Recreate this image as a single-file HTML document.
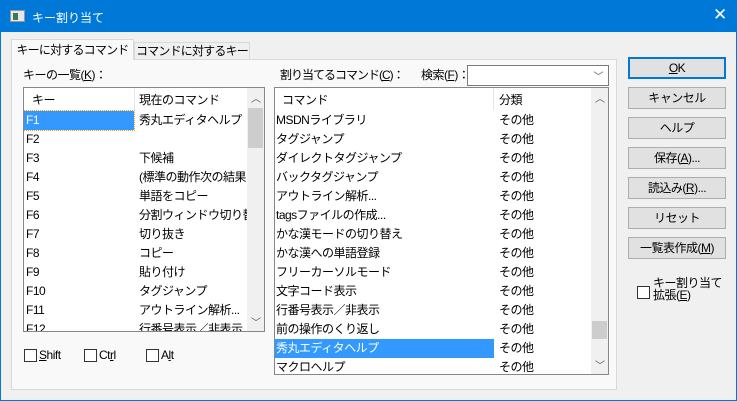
<!DOCTYPE html>
<html><head><meta charset="utf-8"><style>
*{box-sizing:border-box;margin:0;padding:0}
body{width:737px;height:401px;overflow:hidden;font-family:"Liberation Sans","Noto Sans CJK JP",sans-serif;font-size:12px;letter-spacing:-0.5px;color:#000;background:#f0f0f0;position:relative}
.win{position:absolute;left:0;top:0;width:737px;height:401px;border:1px solid #0078d7;background:#f0f0f0}
.title{position:absolute;left:0;top:0;width:737px;height:31px;background:#0078d7;color:#fff;font-size:12px;letter-spacing:0}
.abs{position:absolute;white-space:nowrap}
.panel{position:absolute;left:10px;top:58px;width:606px;height:331px;background:#f9f9f9;border:1px solid #d9d9d9}
.tab{position:absolute;border:1px solid #d9d9d9;border-bottom:none;text-align:center;white-space:nowrap;letter-spacing:-0.8px}
.list{position:absolute;background:#fff;border:1px solid #828790;overflow:hidden}
.row{position:absolute;height:19px;line-height:19px;white-space:nowrap}
.sb{position:absolute;background:#f0f0f0;width:17px}
.btn{position:absolute;left:627px;width:98px;height:22px;background:#e1e1e1;border:1px solid #adadad;text-align:center;line-height:20px;white-space:nowrap}
.cb{position:absolute;width:13px;height:13px;border:1px solid #333;background:#fff}
.sel{background:#3399ff;color:#fff}
</style></head><body>
<div class="win">
<div class="title">
 <div class="abs" style="left:9px;top:9px;width:15px;height:12px;background:#e8e8e8;border:1px solid #999"><div style="position:absolute;left:2px;top:2px;width:5px;height:7px;background:#3a7a5a"></div></div>
 <div class="abs" style="left:31px;top:8px">キー割り当て</div>
 <div class="abs" style="left:712px;top:4px;font-size:17px">✕</div>
</div>
<div class="panel"></div>
<div class="tab" style="left:10px;top:38px;width:123px;height:21px;background:#f9f9f9;line-height:20px">キーに対するコマンド</div>
<div class="tab" style="left:133px;top:41px;width:116px;height:18px;background:#f0f0f0;line-height:17px;border-bottom:1px solid #d9d9d9">コマンドに対するキー</div>
<div class="abs" style="left:22px;top:65px">キーの一覧(<u>K</u>)：</div>
<div class="abs" style="left:279px;top:65px;letter-spacing:-1px">割り当てるコマンド(<u>C</u>)：</div>
<div class="abs" style="left:420px;top:65px">検索(<u>F</u>)：</div>
<div class="abs" style="left:466px;top:64px;width:142px;height:21px;background:#fff;border:1px solid #7a7a7a"><div class="abs" style="right:5px;top:2px;font-size:10px;color:#555">﹀</div></div>

<div class="list" style="left:22px;top:86px;width:242px;height:245px">
 <div class="row" style="left:8px;top:3px">キー</div>
 <div class="abs" style="left:110px;top:0;width:1px;height:22px;background:#e5e5e5"></div>
 <div class="row" style="left:115px;top:3px">現在のコマンド</div>
 <div class="row sel" style="left:0;top:23px;width:110px;padding-left:2px;outline:1px dotted #f90">F1</div>
 <div class="row" style="left:115px;top:23px">秀丸エディタヘルプ</div>
 <div class="row" style="left:2px;top:42px">F2</div>
 <div class="row" style="left:2px;top:61px">F3</div><div class="row" style="left:115px;top:61px">下候補</div>
 <div class="row" style="left:2px;top:80px">F4</div><div class="row" style="left:115px;top:80px">(標準の動作次の結果</div>
 <div class="row" style="left:2px;top:99px">F5</div><div class="row" style="left:115px;top:99px">単語をコピー</div>
 <div class="row" style="left:2px;top:118px">F6</div><div class="row" style="left:115px;top:118px">分割ウィンドウ切り替え</div>
 <div class="row" style="left:2px;top:137px">F7</div><div class="row" style="left:115px;top:137px">切り抜き</div>
 <div class="row" style="left:2px;top:156px">F8</div><div class="row" style="left:115px;top:156px">コピー</div>
 <div class="row" style="left:2px;top:175px">F9</div><div class="row" style="left:115px;top:175px">貼り付け</div>
 <div class="row" style="left:2px;top:194px">F10</div><div class="row" style="left:115px;top:194px">タグジャンプ</div>
 <div class="row" style="left:2px;top:213px">F11</div><div class="row" style="left:115px;top:213px">アウトライン解析...</div>
 <div class="row" style="left:2px;top:232px">F12</div><div class="row" style="left:115px;top:232px">行番号表示／非表示</div>
 <div class="sb" style="left:223px;top:0;height:243px;background:#fff"><div class="abs" style="left:0;top:0;width:17px;height:243px;background:#f0f0f0"></div><div class="abs" style="left:1px;top:20px;width:15px;height:40px;background:#cdcdcd"></div><div class="abs" style="left:4px;top:2px;font-size:10px;color:#555">︿</div><div class="abs" style="left:4px;top:226px;font-size:10px;color:#555">﹀</div></div>
</div>

<div class="list" style="left:273px;top:86px;width:335px;height:288px">
 <div class="row" style="left:7px;top:3px">コマンド</div>
 <div class="abs" style="left:218px;top:0;width:1px;height:22px;background:#e5e5e5"></div>
 <div class="row" style="left:224px;top:3px">分類</div>
 <div class="row" style="left:1px;top:23px">MSDNライブラリ</div>
 <div class="row" style="left:1px;top:42px">タグジャンプ</div>
 <div class="row" style="left:1px;top:61px">ダイレクトタグジャンプ</div>
 <div class="row" style="left:1px;top:80px">バックタグジャンプ</div>
 <div class="row" style="left:1px;top:99px">アウトライン解析...</div>
 <div class="row" style="left:1px;top:118px">tagsファイルの作成...</div>
 <div class="row" style="left:1px;top:137px">かな漢モードの切り替え</div>
 <div class="row" style="left:1px;top:156px">かな漢への単語登録</div>
 <div class="row" style="left:1px;top:175px">フリーカーソルモード</div>
 <div class="row" style="left:1px;top:194px">文字コード表示</div>
 <div class="row" style="left:1px;top:213px">行番号表示／非表示</div>
 <div class="row" style="left:1px;top:232px">前の操作のくり返し</div>
 <div class="row sel" style="left:0;top:251px;width:219px;padding-left:1px">秀丸エディタヘルプ</div>
 <div class="row" style="left:1px;top:270px">マクロヘルプ</div>
 <div class="row" style="left:224px;top:23px">その他</div><div class="row" style="left:224px;top:42px">その他</div><div class="row" style="left:224px;top:61px">その他</div><div class="row" style="left:224px;top:80px">その他</div><div class="row" style="left:224px;top:99px">その他</div><div class="row" style="left:224px;top:118px">その他</div><div class="row" style="left:224px;top:137px">その他</div><div class="row" style="left:224px;top:156px">その他</div><div class="row" style="left:224px;top:175px">その他</div><div class="row" style="left:224px;top:194px">その他</div><div class="row" style="left:224px;top:213px">その他</div><div class="row" style="left:224px;top:232px">その他</div><div class="row" style="left:224px;top:251px">その他</div><div class="row" style="left:224px;top:270px">その他</div>
 <div class="sb" style="left:316px;top:0;height:286px"><div class="abs" style="left:1px;top:233px;width:15px;height:18px;background:#cdcdcd"></div><div class="abs" style="left:4px;top:2px;font-size:10px;color:#555">︿</div><div class="abs" style="left:4px;top:269px;font-size:10px;color:#555">﹀</div></div>
</div>

<div class="cb" style="left:23px;top:348px"></div><div class="abs" style="left:38px;top:347px"><u>S</u>hift</div>
<div class="cb" style="left:83px;top:348px"></div><div class="abs" style="left:98px;top:347px">Ct<u>r</u>l</div>
<div class="cb" style="left:145px;top:348px"></div><div class="abs" style="left:160px;top:347px">A<u>l</u>t</div>

<div class="btn" style="top:56px;border:2px solid #0078d7;line-height:18px"><u>O</u>K</div>
<div class="btn" style="top:86px">キャンセル</div>
<div class="btn" style="top:116px">ヘルプ</div>
<div class="btn" style="top:146px">保存(<u>A</u>)...</div>
<div class="btn" style="top:176px">読込み(<u>R</u>)...</div>
<div class="btn" style="top:206px">リセット</div>
<div class="btn" style="top:236px">一覧表作成(<u>M</u>)</div>
<div class="cb" style="left:636px;top:285px"></div>
<div class="abs" style="left:652px;top:276px;line-height:12px">キー割り当て<br>拡張(<u>E</u>)</div>
</div>
</body></html>
